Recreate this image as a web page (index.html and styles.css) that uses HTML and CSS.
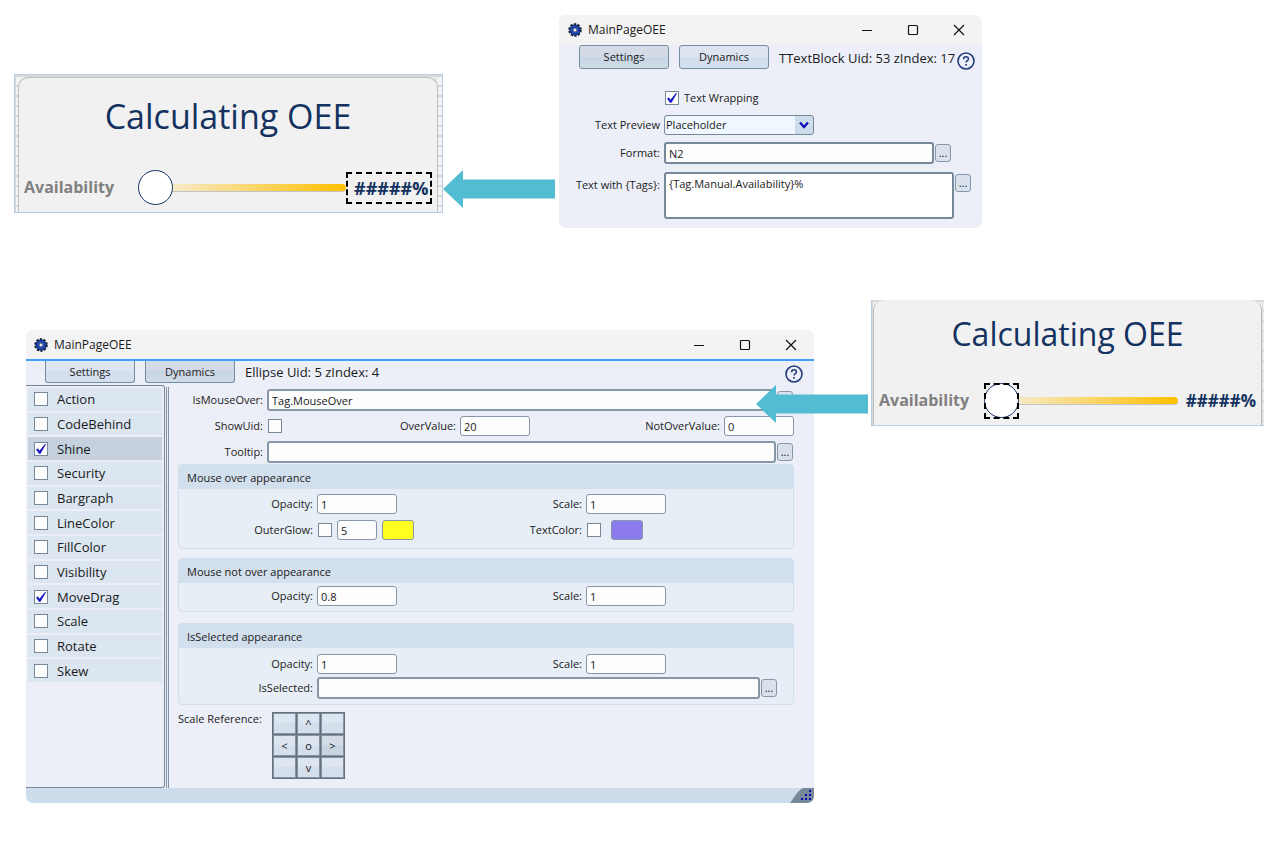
FILE: index.html
```
<!DOCTYPE html>
<html lang="en">
<head>
    <meta charset="UTF-8">
    <meta name="viewport" content="width=device-width, initial-scale=1.0">
    <title>MainPageOEE</title>
    <link rel="stylesheet" href="styles.css">
</head>
<body>

    <!-- Shared icons -->
    <svg class="icon-defs" width="0" height="0" aria-hidden="true">
        <symbol id="gear" viewBox="0 0 14 14">
            <circle cx="7" cy="7" r="5.6" fill="none" stroke="#14213f" stroke-width="2.4" stroke-dasharray="2.2 1.32"/>
            <circle cx="7" cy="7" r="3.8" fill="none" stroke="#1d46b4" stroke-width="3"/>
            <circle cx="7" cy="7" r="5.2" fill="none" stroke="#14213f" stroke-width="0.8"/>
            <circle cx="7" cy="7" r="2" fill="#e8eefa" stroke="#14213f" stroke-width="0.8"/>
        </symbol>
        <symbol id="minimize" viewBox="0 0 12 12"><path d="M1 6.5h10" stroke="#111" fill="none"/></symbol>
        <symbol id="maximize" viewBox="0 0 12 12"><rect x="1.5" y="1.5" width="9" height="9" rx="1" stroke="#111" stroke-width="1.2" fill="none"/></symbol>
        <symbol id="close" viewBox="0 0 12 12"><path d="M1 1l10 10M11 1L1 11" stroke="#111" stroke-width="1.2" fill="none"/></symbol>
        <symbol id="help" viewBox="0 0 18 18">
            <circle cx="9" cy="9" r="8" fill="none" stroke="#233a7c" stroke-width="1.6"/>
            <path d="M6.6 7.2c0-1.5 1-2.4 2.4-2.4s2.4.9 2.4 2.1c0 1.7-2.3 1.8-2.3 3.7" fill="none" stroke="#233a7c" stroke-width="1.5"/>
            <rect x="8.2" y="12" width="1.7" height="1.7" fill="#233a7c"/>
        </symbol>
        <symbol id="arrow" viewBox="0 0 112 38">
            <path d="M0 19L20 0v9.500h92v19H20V38z" fill="#52bdd2"/>
        </symbol>
    </svg>

    <!-- Text block example -->
    <section class="row row-top">
        <div class="preview preview-first">
            <div class="preview-card">
                <h2>Calculating OEE</h2>
                <div class="gauge">
                    <label for="availability-1">Availability</label>
                    <input type="range" id="availability-1" min="0" max="100" value="0">
                    <span class="value selected">#####%</span>
                </div>
            </div>
        </div>

        <svg class="arrow arrow-first"><use href="#arrow"/></svg>

        <div class="window">
            <header class="titlebar">
                <svg class="gear"><use href="#gear"/></svg>
                <h1>MainPageOEE</h1>
                <button class="win-btn" aria-label="Minimize"><svg><use href="#minimize"/></svg></button>
                <button class="win-btn" aria-label="Maximize"><svg><use href="#maximize"/></svg></button>
                <button class="win-btn" aria-label="Close"><svg><use href="#close"/></svg></button>
            </header>
            <div class="toolbar">
                <button class="tab active">Settings</button>
                <button class="tab">Dynamics</button>
                <span class="object-info">TTextBlock Uid: 53 zIndex: 17</span>
                <button class="help" aria-label="Help"><svg><use href="#help"/></svg></button>
            </div>
            <form class="settings">
                <div class="field wrap-field">
                    <input type="checkbox" id="wrapping" checked>
                    <label for="wrapping">Text Wrapping</label>
                </div>
                <div class="field">
                    <label for="preview">Text Preview</label>
                    <span class="select-box">
                        <select id="preview"><option>Placeholder</option></select>
                        <svg viewBox="0 0 18 18"><path d="M5 6.500l4 4.500 4-4.500" fill="none" stroke="#1010b4" stroke-width="2.400"/></svg>
                    </span>
                </div>
                <div class="field format-field">
                    <label for="format">Format:</label>
                    <input type="text" class="wide" id="format" value="N2">
                    <button type="button" class="more">...</button>
                </div>
                <div class="field tags-field">
                    <label for="tags">Text with {Tags}:</label>
                    <textarea class="wide" id="tags">{Tag.Manual.Availability}%</textarea>
                    <button type="button" class="more">...</button>
                </div>
            </form>
        </div>
    </section>

    <!-- Ellipse example -->
    <section class="row row-bottom">
        <div class="window dynamics-window">
            <header class="titlebar">
                <svg class="gear"><use href="#gear"/></svg>
                <h1>MainPageOEE</h1>
                <button class="win-btn" aria-label="Minimize"><svg><use href="#minimize"/></svg></button>
                <button class="win-btn" aria-label="Maximize"><svg><use href="#maximize"/></svg></button>
                <button class="win-btn" aria-label="Close"><svg><use href="#close"/></svg></button>
            </header>
            <div class="toolbar">
                <button class="tab">Settings</button>
                <button class="tab active">Dynamics</button>
                <span class="object-info">Ellipse Uid: 5 zIndex: 4</span>
                <button class="help" aria-label="Help"><svg><use href="#help"/></svg></button>
            </div>

            <div class="content">
                <aside class="sidebar">
                    <div class="dynamics">
                        <label><input type="checkbox">Action</label>
                        <label><input type="checkbox">CodeBehind</label>
                        <label class="current"><input type="checkbox" checked>Shine</label>
                        <label><input type="checkbox">Security</label>
                        <label><input type="checkbox">Bargraph</label>
                        <label><input type="checkbox">LineColor</label>
                        <label><input type="checkbox">FillColor</label>
                        <label><input type="checkbox">Visibility</label>
                        <label><input type="checkbox" checked>MoveDrag</label>
                        <label><input type="checkbox">Scale</label>
                        <label><input type="checkbox">Rotate</label>
                        <label><input type="checkbox">Skew</label>
                    </div>
                </aside>
                <div class="splitter"></div>

                <form class="shine">
                    <div class="field">
                        <label for="mouse-over">IsMouseOver:</label>
                        <input type="text" class="wide" id="mouse-over" value="Tag.MouseOver">
                        <button type="button" class="more">...</button>
                    </div>
                    <div class="values">
                        <div class="field">
                            <label for="show-uid">ShowUid:</label>
                            <input type="checkbox" id="show-uid">
                        </div>
                        <div class="field">
                            <label for="over-value">OverValue:</label>
                            <input type="text" id="over-value" value="20">
                        </div>
                        <div class="field">
                            <label for="not-over-value">NotOverValue:</label>
                            <input type="text" id="not-over-value" value="0">
                        </div>
                    </div>
                    <div class="field">
                        <label for="tooltip">Tooltip:</label>
                        <input type="text" class="wide" id="tooltip">
                        <button type="button" class="more">...</button>
                    </div>

                    <section class="group group-over">
                        <h3>Mouse over appearance</h3>
                        <div class="pair">
                            <div class="field">
                                <label for="over-opacity">Opacity:</label>
                                <input type="text" id="over-opacity" value="1">
                            </div>
                            <div class="field">
                                <label for="over-scale">Scale:</label>
                                <input type="text" id="over-scale" value="1">
                            </div>
                        </div>
                        <div class="pair">
                            <div class="field">
                                <label for="outer-glow">OuterGlow:</label>
                                <input type="checkbox" id="outer-glow">
                                <input type="text" class="glow-size" aria-label="Glow size" value="5">
                                <button type="button" class="swatch glow-color" aria-label="Glow color"></button>
                            </div>
                            <div class="field">
                                <label for="text-color">TextColor:</label>
                                <input type="checkbox" id="text-color">
                                <button type="button" class="swatch text-color" aria-label="Text color"></button>
                            </div>
                        </div>
                    </section>

                    <section class="group group-not-over">
                        <h3>Mouse not over appearance</h3>
                        <div class="pair">
                            <div class="field">
                                <label for="not-over-opacity">Opacity:</label>
                                <input type="text" id="not-over-opacity" value="0.8">
                            </div>
                            <div class="field">
                                <label for="not-over-scale">Scale:</label>
                                <input type="text" id="not-over-scale" value="1">
                            </div>
                        </div>
                    </section>

                    <section class="group group-selected">
                        <h3>IsSelected appearance</h3>
                        <div class="pair">
                            <div class="field">
                                <label for="selected-opacity">Opacity:</label>
                                <input type="text" id="selected-opacity" value="1">
                            </div>
                            <div class="field">
                                <label for="selected-scale">Scale:</label>
                                <input type="text" id="selected-scale" value="1">
                            </div>
                        </div>
                        <div class="field selected-tag">
                            <label for="is-selected">IsSelected:</label>
                            <input type="text" class="wide" id="is-selected">
                            <button type="button" class="more">...</button>
                        </div>
                    </section>

                    <div class="reference">
                        <span>Scale Reference:</span>
                        <div class="anchor-grid">
                            <button type="button" aria-label="Top left"></button>
                            <button type="button">^</button>
                            <button type="button" aria-label="Top right"></button>
                            <button type="button">&lt;</button>
                            <button type="button">o</button>
                            <button type="button" class="active">&gt;</button>
                            <button type="button" aria-label="Bottom left"></button>
                            <button type="button">v</button>
                            <button type="button" aria-label="Bottom right"></button>
                        </div>
                    </div>
                </form>
            </div>

            <footer class="statusbar">
                <svg viewBox="0 0 24 15">
                    <path d="M0 15C4 10 7 3 13 0h11v10q0 5-5 5z" fill="#778899"/>
                    <path d="M19 2h2v2h-2zM15 6h2v2h-2zM19 6h2v2h-2zM11 10h2v2h-2zM15 10h2v2h-2zM19 10h2v2h-2z" fill="#0808b8"/>
                </svg>
            </footer>
        </div>

        <div class="connector">
            <svg class="arrow"><use href="#arrow"/></svg>
        </div>

        <div class="preview preview-second">
            <div class="preview-card">
                <h2>Calculating OEE</h2>
                <div class="gauge">
                    <label for="availability-2">Availability</label>
                    <span class="slider-box">
                        <input type="range" id="availability-2" min="0" max="100" value="0">
                    </span>
                    <span class="value">#####%</span>
                </div>
            </div>
        </div>
    </section>

</body>
</html>
```
FILE: styles.css
```
/* General */
*, *::before {
    box-sizing: border-box;
}

body {
    margin: 0;
    background-color: #fff;
    color: #1a1a1a;
    font-family: "Segoe UI", "Open Sans", "Noto Sans", sans-serif;
    font-size: 11px;
    line-height: 16px;
}

h1, h2, h3 {
    margin: 0;
    font-weight: 400;
}

button, input, select, textarea {
    margin: 0;
    color: inherit;
    font: inherit;
}

.icon-defs {
    position: absolute;
}

.row {
    display: grid;
    align-items: start;
}

.row-top {
    grid-template-columns: 429fr 116px 423fr 281fr;
    padding: 15px 14px 0;
}

.row-bottom {
    grid-template-columns: 788fr 57px 393fr;
    padding: 0 13px 58px 26px;
    margin-top: 72px;
}

.arrow {
    display: block;
    width: 112px;
    height: 38px;
}

.arrow-first {
    margin-top: 155px;
}

.connector {
    position: relative;
    height: 38px;
    margin-top: 85px;
    z-index: 1;
}

.connector .arrow {
    position: absolute;
    top: 0;
    right: 3px;
}

/* Page preview with the gauge */
.preview {
    overflow: hidden;
    border: 1px solid #b9cbe6;
    background-color: #f3f3f3;
    background-image:
        linear-gradient(#d9d9d9 2px, transparent 2px),
        linear-gradient(90deg, #d9d9d9 1px, transparent 1px);
    background-size: 10px 10px;
}

.preview-first {
    margin-top: 59px;
    padding: 2px 4px 0 3px;
}

.preview-second {
    padding: 0 2px 0 1px;
    border-width: 0 0 1px 1px;
}

.preview-card {
    border: 1px solid #bdbdbd;
    border-bottom: 0;
    border-radius: 10px 10px 0 0;
    background-color: #f1f1f1;
}

.preview-second .preview-card {
    border-top: 0;
}

.preview-card h2 {
    color: #14325f;
    text-align: center;
}

.preview-first h2 {
    padding-top: 14px;
    font-size: 34px;
    line-height: 48px;
}

.preview-second h2 {
    padding-top: 12px;
    font-size: 32px;
    line-height: 44px;
}

.gauge {
    display: flex;
    align-items: center;
    padding: 30px 5px 6px;
    font-size: 16px;
    font-weight: 700;
}

.preview-second .gauge {
    padding-top: 27px;
}

.gauge label {
    flex: none;
    width: 114px;
    padding-bottom: 3px;
    color: #808080;
}

.preview-second .gauge label {
    width: 105px;
}

.gauge input {
    flex: 1;
    width: 100%;
    min-width: 0;
    height: 36px;
    appearance: none;
    background: none;
}

.gauge input::-webkit-slider-runnable-track {
    height: 8px;
    border-bottom: 1px solid #c4c4c4;
    border-radius: 4px;
    background: linear-gradient(90deg, #f1f1f1, #f7e8c0 20%, #ffc000);
}

.gauge input::-webkit-slider-thumb {
    appearance: none;
    width: 35px;
    height: 35px;
    margin-top: -14px;
    border: 1px solid #14325f;
    border-radius: 50%;
    background-color: #fff;
}

.slider-box {
    position: relative;
    display: flex;
    flex: 1;
    min-width: 0;
}

.slider-box::before {
    content: "";
    position: absolute;
    top: 0;
    left: 0;
    width: 35px;
    height: 36px;
    border: 2px dashed #000;
    pointer-events: none;
    z-index: 1;
}

.value {
    flex: none;
    margin-left: 8px;
    color: #14325f;
    font-size: 17px;
    line-height: 28px;
}

.value.selected {
    width: 86px;
    margin: 0;
    padding-left: 6px;
    border: 2px dashed #000;
    font-size: 18px;
    white-space: nowrap;
}

/* Windows */
.window {
    overflow: hidden;
    border-radius: 7px;
    background-color: #eceff8;
}

.titlebar {
    display: flex;
    align-items: center;
    height: 30px;
    padding: 0 17px 0 9px;
    background-color: #f3f3f3;
}

.titlebar h1 {
    flex: 1;
    font-size: 12px;
}

.gear {
    width: 14px;
    height: 14px;
    margin-right: 6px;
}

.win-btn {
    display: flex;
    margin-left: 34px;
    padding: 0;
    border: 0;
    background: none;
}

.win-btn svg {
    width: 12px;
    height: 12px;
}

.toolbar {
    display: flex;
    gap: 10px;
    padding: 0 7px 0 20px;
}

.tab {
    flex: none;
    width: 90px;
    height: 24px;
    padding: 0;
    border: 1px solid #778ba0;
    border-radius: 3px;
    background: linear-gradient(#dde5f0 50%, #d3dfec 50%);
}

.tab.active {
    background: linear-gradient(#d3dbe7 50%, #c7d5e2 50%, #d0dbe7);
}

.object-info {
    flex: 1;
    font-size: 13px;
    line-height: 26px;
    white-space: nowrap;
}

.help {
    display: flex;
    height: 18px;
    margin: 7px 0 0 -10px;
    padding: 0;
    border: 0;
    background: none;
}

.help svg {
    width: 18px;
    height: 18px;
}

/* Form controls */
.field {
    display: flex;
    align-items: center;
}

.field label {
    flex: none;
    margin-right: 4px;
    text-align: right;
    white-space: nowrap;
}

input[type="text"] {
    width: 80px;
    height: 20px;
    padding: 0 3px;
    border: 1px solid #8797a8;
    border-radius: 3px;
    background-color: #fdfdfd;
}

input.wide {
    flex: 1;
    min-width: 0;
    height: 22px;
    border-width: 2px;
}

input[type="checkbox"] {
    flex: none;
    width: 14px;
    height: 14px;
    margin: 0 1px;
    appearance: none;
    border: 1px solid #778899;
    background-color: #fdfdfd;
}

input[type="checkbox"]:checked {
    background-image: url("data:image/svg+xml,%3Csvg xmlns='http://www.w3.org/2000/svg' viewBox='0 0 12 12'%3E%3Cpath d='M1 6.500l2-1 1.500 2.300L10 1l1 .3-5.500 9.500H4z' fill='%231515c4'/%3E%3C/svg%3E");
}

.more {
    flex: none;
    width: 16px;
    height: 18px;
    margin-left: 1px;
    padding: 0;
    border: 1px solid #8797a8;
    border-radius: 3px;
    background-color: #d8e1ec;
    line-height: 14px;
}

/* Text block settings */
.settings {
    padding: 19px 11px 9px 0;
}

.settings label {
    width: 101px;
}

.settings .wrap-field {
    margin-bottom: 9px;
    padding-left: 105px;
}

.settings .wrap-field label {
    width: auto;
    margin-left: 4px;
}

.select-box {
    position: relative;
    width: 150px;
    height: 20px;
}

.select-box select {
    width: 100%;
    height: 20px;
    padding: 0 20px 0 1px;
    appearance: none;
    border: 1px solid #778899;
    border-radius: 3px;
    background: linear-gradient(90deg, #f0f8ff 130px, #cddceb 130px);
}

.select-box svg {
    position: absolute;
    top: 1px;
    right: 1px;
    width: 18px;
    height: 18px;
    pointer-events: none;
}

.format-field {
    margin: 7px 0 8px;
    padding-right: 20px;
}

.tags-field {
    align-items: flex-start;
}

.tags-field label {
    line-height: 26px;
}

.tags-field .more {
    margin-top: 2px;
}

.settings .wide {
    border-color: #778899;
}

textarea.wide {
    flex: 1;
    min-width: 0;
    height: 47px;
    padding: 2px 3px;
    border: 2px solid #778899;
    border-radius: 3px;
    background-color: #fff;
    resize: none;
}

/* Dynamics window */
.dynamics-window {
    margin-top: 30px;
}

.dynamics-window .titlebar {
    height: 31px;
    padding-left: 8px;
    border-bottom: 2px solid #419ffb;
}

.dynamics-window .toolbar {
    height: 24px;
    padding-right: 11px;
    padding-left: 19px;
}

.dynamics-window .tab {
    height: 22px;
    border-top: 0;
    border-radius: 0 0 3px 3px;
}

.dynamics-window .object-info {
    line-height: 22px;
}

.dynamics-window .help {
    margin-top: 4px;
}

.content {
    display: flex;
}

.sidebar {
    width: 139px;
    padding: 2px;
    border: 1px solid #778899;
    border-left: 0;
    border-radius: 0 3px 3px 0;
}

.dynamics {
    display: grid;
    grid-auto-rows: 1fr;
    gap: 2px;
    height: 294px;
}

.dynamics label {
    display: flex;
    align-items: center;
    gap: 8px;
    padding-left: 5px;
    background-color: #dce6f0;
    font-size: 13px;
}

.dynamics label.current {
    background-color: #c5d1de;
}

.splitter {
    width: 3px;
    margin: 2px 0 0 1px;
    border: 1px solid #8292a4;
    border-width: 0 1px;
}

.shine {
    flex: 1;
    padding: 4px 20px 9px 9px;
}

.shine > .field label,
.values .field:first-child label {
    width: 85px;
}

.shine > .field {
    padding-right: 1px;
}

.values {
    display: grid;
    grid-template-columns: 105px 247fr 264fr;
    margin: 5px 0;
}

.values .field + .field {
    justify-content: flex-end;
}

.values input[type="text"] {
    width: 70px;
}

.group {
    border: 1px solid #d1dfec;
    border-radius: 4px;
    background-color: #e7eef6;
}

.group h3 {
    padding: 5px 8px 3px;
    background-color: #d2dfec;
    font-size: 11px;
}

.group .field label {
    width: 134px;
}

.pair {
    display: grid;
    grid-template-columns: 269fr 345fr;
}

.group-over {
    margin-top: 1px;
    padding-bottom: 8px;
}

.group-over .pair {
    margin-top: 5px;
}

.group-over .pair + .pair {
    margin-top: 6px;
}

.group-not-over {
    margin: 9px 0 11px;
    padding-bottom: 5px;
}

.group-not-over .pair {
    margin-top: 3px;
}

.group-selected {
    padding-bottom: 5px;
}

.group-selected .pair {
    margin: 6px 0 3px;
}

.selected-tag {
    padding-right: 16px;
}

.group .glow-size {
    width: 40px;
    margin: 0 5px 0 4px;
}

.swatch {
    width: 32px;
    height: 20px;
    padding: 0;
    border: 1px solid #8797a8;
    border-radius: 3px;
}

.glow-color {
    background-color: #ffff1e;
}

.text-color {
    margin-left: 9px;
    background-color: #8b7bee;
}

.reference {
    display: flex;
    justify-content: space-between;
    width: 167px;
    margin-top: 7px;
}

.reference span {
    line-height: 14px;
    white-space: nowrap;
}

.anchor-grid {
    display: grid;
    grid-template-columns: repeat(3, 23px);
    grid-auto-rows: 21px;
    gap: 1px;
    border: 1px solid #66707a;
    background-color: #66707a;
}

.anchor-grid button {
    padding: 0;
    border: 1px solid #8494a4;
    background: linear-gradient(#dde5f0 50%, #d5deeb 50%);
    line-height: 14px;
}

.anchor-grid .active {
    background: linear-gradient(#d3dbe7 50%, #c7d5e2 50%);
}

.statusbar {
    display: flex;
    justify-content: flex-end;
    height: 15px;
    background-color: #cdddec;
}

.statusbar svg {
    width: 24px;
    height: 15px;
}
```
